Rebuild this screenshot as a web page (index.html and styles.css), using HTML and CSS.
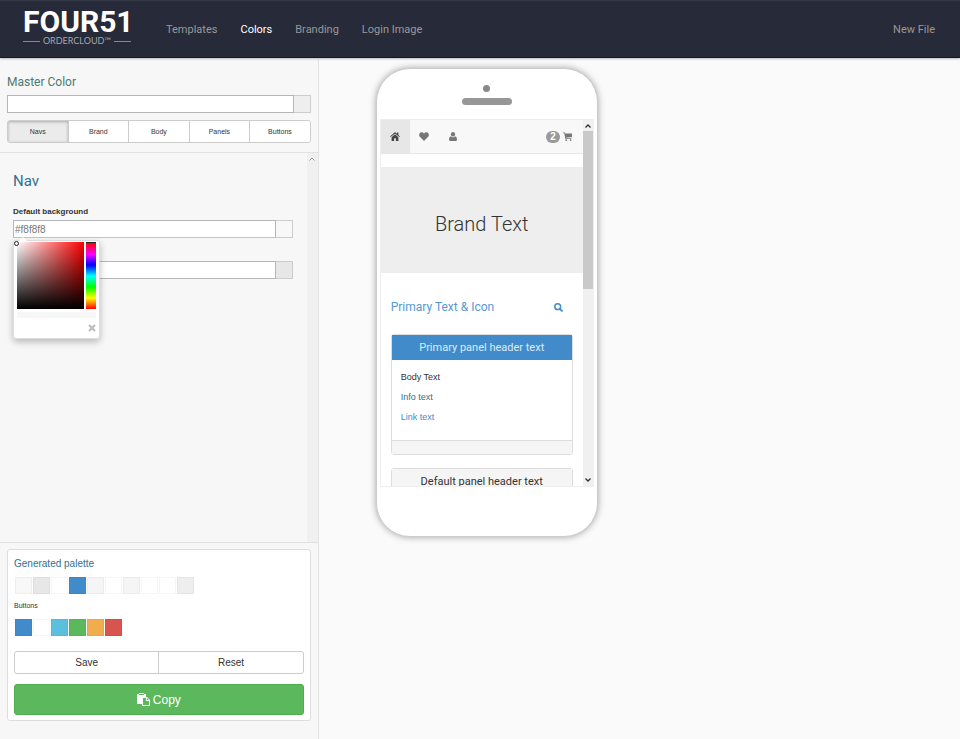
FILE: index.html
```html
<!DOCTYPE html>
<html lang="en">
<head>
<meta charset="utf-8">
<title>Four51 OrderCloud - Colors</title>
<link rel="stylesheet" href="styles.css">
</head>
<body>
<header class="topbar">
  <a class="logo" href="#">
    <span class="logo-name">FOUR51</span>
    <span class="logo-sub">ORDERCLOUD™</span>
  </a>
  <nav class="menu">
    <a href="#">Templates</a>
    <a class="active" href="#">Colors</a>
    <a href="#">Branding</a>
    <a href="#">Login Image</a>
  </nav>
  <a class="new-file" href="#">New File</a>
</header>
<div class="layout">
  <aside class="sidebar">
    <section class="master">
      <label class="master-title" for="master">Master Color</label>
      <div class="color-input"><input id="master" type="text"><span class="swatch grey"></span></div>
      <div class="tabs">
        <button class="on" type="button">Navs</button>
        <button type="button">Brand</button>
        <button type="button">Body</button>
        <button type="button">Panels</button>
        <button type="button">Buttons</button>
      </div>
    </section>
    <section class="fields">
      <div class="fields-body">
        <h2>Nav</h2>
        <div class="field">
          <label for="navbg">Default background</label>
          <div class="color-input"><input id="navbg" class="focused" type="text" value="#f8f8f8"><span class="swatch pale"></span></div>
          <div class="picker">
            <div class="picker-row">
              <div class="saturation"><span class="handle"></span></div>
              <div class="hue"></div>
            </div>
            <div class="preview"></div>
            <button class="close" type="button" aria-label="Close">
              <svg width="8" height="8" viewBox="0 0 8 8"><path d="M1 1l6 6M7 1L1 7" stroke="#bbb" stroke-width="2"/></svg>
            </button>
          </div>
        </div>
        <div class="field second">
          <div class="color-input"><input type="text" aria-label="Active background"><span class="swatch mid"></span></div>
        </div>
      </div>
      <div class="track">
        <svg width="6" height="4" viewBox="0 0 6 4"><path d="M.5 3.500L3 1l2.500 2.500" fill="none" stroke="#999"/></svg>
      </div>
    </section>
    <section class="output">
      <div class="card">
        <h3>Generated palette</h3>
        <div class="palette">
          <span class="c-pale"></span><span class="c-mid"></span><span class="c-white"></span><span class="c-blue"></span><span class="c-light"></span><span class="c-white"></span><span class="c-light"></span><span class="c-white"></span><span class="c-white"></span><span class="c-grey"></span>
        </div>
        <h4>Buttons</h4>
        <div class="palette">
          <span class="c-blue"></span><span class="c-white"></span><span class="c-cyan"></span><span class="c-green"></span><span class="c-orange"></span><span class="c-red"></span>
        </div>
        <div class="pair"><button type="button">Save</button><button type="button">Reset</button></div>
        <button class="copy" type="button">
          <svg width="13" height="13" viewBox="0 0 13 13"><path fill="#fff" d="M0 1h2V0h5v1h2v3H5v7H0z"/><path fill="#5cb85c" d="M2 1h5v1H2z"/><path fill="#fff" d="M5 4h5l3 3v6H5z"/><path fill="#5cb85c" d="M6 5h3v3h3v4H6zM10 5l2 2h-2z"/></svg>
          Copy
        </button>
      </div>
    </section>
  </aside>
  <main class="stage">
    <div class="phone">
      <div class="camera"></div>
      <div class="speaker"></div>
      <div class="screen">
        <div class="page">
          <nav class="appbar">
            <a class="current" href="#" aria-label="Home"><svg width="10" height="9" viewBox="0 0 10 9"><path fill="#444" d="M5 0l2 1.700V.6h1.400v2.300L10 4.400l-.6.7L5 1.400.6 5.100 0 4.400zM5 2.300l3.400 2.900V9H5.900V6.200H4.100V9H1.600V5.200z"/></svg></a>
            <a href="#" aria-label="Favorites"><svg width="10" height="9" viewBox="0 0 10 9"><path fill="#777" d="M5 9L.8 4.800C-.5 3 .3.2 2.700.2 3.900.2 4.600.9 5 1.600 5.400.9 6.100.2 7.300.2c2.400 0 3.200 2.800 1.900 4.600z"/></svg></a>
            <a href="#" aria-label="Account"><svg width="8" height="9" viewBox="0 0 8 9"><ellipse cx="4" cy="2.300" rx="2.100" ry="2.300" fill="#777"/><path fill="#777" d="M1.800 4.200Q4 6.200 6.200 4.200 8 4.500 8 7.500 8 9 6.800 9H1.200Q0 9 0 7.500 0 4.500 1.800 4.200z"/></svg></a>
            <a class="cart" href="#"><span class="count">2</span><svg width="9" height="9" viewBox="0 0 9 9"><path fill="#777" d="M0 .5h1.900l.3 1H9v3.400l-6 .8.1.6H8.400v.7H2.400L1.300 1.200H0z"/><circle cx="3.200" cy="8.100" r=".9" fill="#777"/><circle cx="7.600" cy="8.100" r=".9" fill="#777"/></svg></a>
          </nav>
          <div class="brand">Brand Text</div>
          <div class="content">
            <div class="heading"><span>Primary Text &amp; Icon</span><svg width="9" height="9" viewBox="0 0 9 9"><circle cx="3.700" cy="3.700" r="2.900" fill="none" stroke="#428bca" stroke-width="1.500"/><path d="M5.800 5.800l2.700 2.700" stroke="#428bca" stroke-width="1.800"/></svg></div>
            <section class="panel">
              <h5 class="primary">Primary panel header text</h5>
              <div class="panel-body">
                <p>Body Text</p>
                <p class="info">Info text</p>
                <p><a href="#">Link text</a></p>
              </div>
              <div class="panel-foot"></div>
            </section>
            <section class="panel"><h5>Default panel header text</h5></section>
          </div>
        </div>
        <div class="scroller">
          <svg width="6" height="4" viewBox="0 0 6 4"><path d="M.5 3.500L3 1l2.500 2.500" fill="none" stroke="#333" stroke-width="1.300"/></svg>
          <div class="thumb"></div>
          <svg width="6" height="4" viewBox="0 0 6 4"><path d="M.5.5L3 3 5.500.5" fill="none" stroke="#333" stroke-width="1.300"/></svg>
        </div>
      </div>
    </div>
  </main>
</div>
</body>
</html>
```
FILE: styles.css
```css
* { box-sizing: border-box; }
body {
  margin: 0;
  min-height: 100vh;
  display: flex;
  flex-direction: column;
  background: #fafafa;
  color: #333;
  font-family: "Liberation Sans", Arial, sans-serif;
  font-size: 10px;
}
h2, h3, h4, h5, p { margin: 0; font-weight: 400; }
a { text-decoration: none; color: #428bca; }
button, input { font-family: inherit; color: #333; }
svg { display: block; }

.topbar {
  height: 58px;
  flex: none;
  display: flex;
  align-items: center;
  padding: 0 25px 0 23px;
  background: #272a38;
  border-top: 1px solid #343847;
  border-bottom: 1px solid #151724;
  box-shadow: 0 1px 2px #bbb;
  z-index: 1;
}
.topbar a, .master-title, .fields h2, .brand, .heading, .panel h5 {
  font-family: Roboto, "Liberation Sans", sans-serif;
}
.topbar .logo {
  width: 108px;
  margin-right: 35px;
  padding-bottom: 4px;
  color: #fff;
}
.topbar .logo-name {
  display: block;
  font: 700 30px/28px Roboto, sans-serif;
}
.topbar .logo-sub {
  display: flex;
  align-items: center;
  gap: 3px;
  font: 400 9px/10px Lato, sans-serif;
  color: #a4a6af;
}
.logo-sub::before, .logo-sub::after {
  content: "";
  flex: 1;
  height: 1px;
  background: #858894;
}
.menu { display: flex; gap: 23px; flex: 1; }
.menu a, .new-file { padding-top: 2px; font-size: 11px; line-height: 20px; color: #999; }
.menu a.active { color: #fff; }

.layout { display: flex; flex: 1; }
.sidebar {
  width: 33.2%;
  display: flex;
  flex-direction: column;
  background: #f7f7f7;
  border-right: 1px solid #e4e4e4;
}
.master { padding: 14px 7px 9px; border-bottom: 1px solid #e2e2e2; }
.master-title {
  display: block;
  font-size: 12px;
  line-height: 20px;
  margin-bottom: 3px;
  color: #4b7b70;
}
.color-input { display: flex; height: 18px; }
.color-input input {
  flex: 1;
  min-width: 0;
  padding: 0 1px;
  border: 1px solid #b5b6ba;
  border-radius: 0;
  background: #fff;
  font-size: 10px;
  color: #777;
  outline: 0;
}
.color-input .focused { border-bottom-color: #a9cbed; }
.swatch { width: 17px; border: 1px solid #ccc; border-left: 0; }
.grey { background: #eee; }
.pale { background: #f8f8f8; }
.mid { background: #e7e7e7; }

.tabs {
  display: flex;
  height: 23px;
  margin-top: 7px;
  border: 1px solid #ccc;
  border-radius: 3px;
  overflow: hidden;
}
.tabs button {
  flex: 1;
  padding: 0;
  border: 0;
  border-right: 1px solid #ccc;
  background: #fff;
  font-size: 7px;
}
.tabs button:last-child { border-right: 0; }
.tabs .on { background: #ebebeb; box-shadow: inset 0 1px 3px #aaa; }

.fields { display: flex; flex: 1; border-bottom: 1px solid #e0e0e0; }
.fields-body { flex: 1; padding: 15px 14px 0 13px; }
.fields h2 { font-size: 15px; line-height: 26px; color: #31708f; }
.field { position: relative; margin-top: 12px; }
.field label { display: block; font-size: 8px; line-height: 12px; font-weight: 700; margin-bottom: 2px; }
.field.second { margin-top: 23px; }
.track {
  width: 11px;
  padding-top: 4px;
  background: #f0f0f0;
  display: flex;
  justify-content: center;
}
.picker {
  position: absolute;
  z-index: 2;
  top: 34px;
  left: 0;
  width: 87px;
  height: 99px;
  padding: 1px 3px;
  background: #fff;
  border: 1px solid #ddd;
  border-radius: 3px;
  box-shadow: 0 3px 7px rgba(0, 0, 0, .25);
}
.picker::before {
  content: "";
  position: absolute;
  top: -4px;
  left: 5px;
  border: 4px solid transparent;
  border-top: 0;
  border-bottom-color: #fff;
}
.picker-row { display: flex; gap: 2px; height: 67px; }
.saturation {
  position: relative;
  width: 67px;
  background: linear-gradient(to top, #000, transparent), linear-gradient(to right, #fff, #f00);
}
.handle {
  position: absolute;
  top: -1px;
  left: -3px;
  width: 5px;
  height: 5px;
  border: 1px solid #222;
  border-radius: 50%;
}
.hue {
  width: 10px;
  border-top: 1px solid #222;
  background: linear-gradient(#f00, #f0f, #00f, #0ff, #0f0, #ff0, #f00);
}
.preview { height: 6px; margin-top: 3px; background: #f7f7f7; }
.close { display: block; margin: 6px 0 0 auto; padding: 0; border: 0; background: none; }

.output { padding: 6px 7px 18px; }
.card {
  padding: 7px 6px 5px;
  background: #fff;
  border: 1px solid #ddd;
  border-radius: 3px;
}
.card h3 { font-size: 10px; line-height: 14px; color: #31708f; }
.card h4 { font-size: 7px; line-height: 10px; margin-top: 7px; }
.palette { display: flex; gap: 1px; margin-top: 6px; padding-left: 1px; }
.card h4 + .palette { margin-top: 8px; }
.palette span { width: 17px; height: 17px; border: 1px solid rgba(0, 0, 0, .04); }
.c-pale { background: #f8f8f8; }
.c-mid { background: #e7e7e7; }
.c-white { background: #fff; }
.c-light { background: #f5f5f5; }
.c-grey { background: #eee; }
.c-blue { background: #428bca; }
.c-cyan { background: #5bc0de; }
.c-green { background: #5cb85c; }
.c-orange { background: #f0ad4e; }
.c-red { background: #d9534f; }
.pair {
  display: flex;
  height: 23px;
  margin-top: 15px;
  border: 1px solid #ccc;
  border-radius: 3px;
}
.pair button { flex: 1; padding: 0; border: 0; background: none; font-size: 10px; }
.pair button + button { border-left: 1px solid #ccc; }
.copy {
  display: flex;
  align-items: center;
  justify-content: center;
  gap: 3px;
  width: 100%;
  height: 31px;
  margin-top: 10px;
  border: 1px solid #4cae4c;
  border-radius: 3px;
  background: #5cb85c;
  color: #fff;
  font-size: 12px;
}

.stage { flex: 1; padding: 10px 57px; }
.phone {
  display: flex;
  flex-direction: column;
  align-items: center;
  width: 222px;
  padding: 16px 3px 49px;
  background: #fff;
  border: 1px solid #ccc;
  border-radius: 34px;
  box-shadow: 0 0 7px rgba(0, 0, 0, .35);
}
.camera { width: 7px; height: 7px; border-radius: 50%; background: #888; }
.speaker { width: 50px; height: 7px; margin: 6px 0 14px; border-radius: 4px; background: #979797; }
.screen { display: flex; width: 100%; height: 368px; overflow: hidden; border: 1px solid #eee; border-right: 0; }
.page { flex: 1; height: 366px; overflow: hidden; }
.appbar { display: flex; height: 34px; background: #f8f8f8; border-bottom: 1px solid #e7e7e7; }
.appbar a { width: 29px; display: flex; align-items: center; justify-content: center; }
.appbar .cart { width: auto; gap: 3px; margin-left: auto; padding-right: 11px; }
.appbar .current { background: #e7e7e7; }
.count {
  padding: 0 4px;
  border-radius: 6px;
  background: #999;
  color: #fff;
  font-size: 10px;
  line-height: 12px;
  font-weight: 700;
}
.brand {
  margin-top: 13px;
  padding: 44px 0 36px;
  background: #eee;
  text-align: center;
  font-size: 20px;
  line-height: 26px;
  font-weight: 300;
}
.content { padding: 24px 10px 0; }
.heading {
  display: flex;
  align-items: center;
  justify-content: space-between;
  padding-right: 10px;
  font-size: 12px;
  line-height: 20px;
  color: #5699d2;
}
.panel { margin-top: 17px; border: 1px solid #ddd; border-radius: 3px; }
.panel + .panel { margin-top: 13px; }
.panel h5 { font-size: 11px; line-height: 25px; text-align: center; background: #f5f5f5; }
.panel .primary { background: #428bca; color: #d9ebf8; }
.panel-body { padding: 7px 9px 13px; font-size: 9px; line-height: 20px; }
.info { color: #31708f; }
.panel-foot { height: 14px; background: #f5f5f5; border-top: 1px solid #ddd; }
.scroller {
  width: 11px;
  padding: 4px 0;
  display: flex;
  flex-direction: column;
  align-items: center;
  background: #f0f0f0;
}
.thumb { width: 10px; height: 158px; margin: 3px 0 auto; background: #c9c9c9; }
```
